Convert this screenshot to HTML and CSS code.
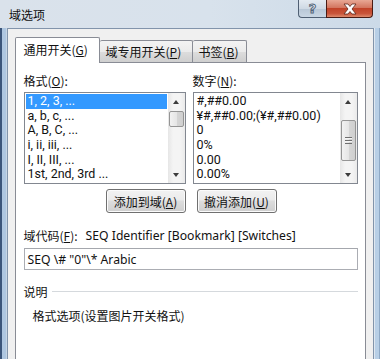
FILE: index.html
```html
<!DOCTYPE html>
<html>
<head>
<meta charset="utf-8">
<link rel="stylesheet" href="styles.css">
</head>
<body>
<div class="window">
  <div class="titlebar">
    <span class="title">域选项</span>
    <div class="caption-btns">
      <div class="cbtn help"><span>?</span></div>
      <div class="cbtn close">
        <svg width="16" height="12" viewBox="0 0 16 12"><path d="M2 1 H6 L8 3.5 L10 1 H14 L10 6 L14 11 H10 L8 8.5 L6 11 H2 L6 6 Z" fill="#fff" stroke="#5a2418" stroke-width="0.8" stroke-linejoin="round"/></svg>
      </div>
    </div>
  </div>
  <div class="main">
    <div class="frame-l"></div>
    <div class="client">
      <div class="tabs">
        <div class="tab active">通用开关(<u>G</u>)</div>
        <div class="tab t2">域专用开关(<u>P</u>)</div>
        <div class="tab t3">书签(<u>B</u>)</div>
      </div>
      <div class="panel">
        <div class="lists">
          <div class="col">
            <div class="label">格式(<u>O</u>):</div>
            <div class="listbox lb1">
              <div class="items">
                <div class="item sel">1, 2, 3, ...</div>
                <div class="item">a, b, c, ...</div>
                <div class="item">A, B, C, ...</div>
                <div class="item">i, ii, iii, ...</div>
                <div class="item">I, II, III, ...</div>
                <div class="item">1st, 2nd, 3rd ...</div>
              </div>
              <div class="scrollbar">
                <div class="arrow"><span class="tri up"></span></div>
                <div class="track"><div class="thumb thumb-a"></div></div>
                <div class="arrow"><span class="tri down"></span></div>
              </div>
            </div>
          </div>
          <div class="col">
            <div class="label">数字(<u>N</u>):</div>
            <div class="listbox lb2">
              <div class="items">
                <div class="item">#,##0.00</div>
                <div class="item">¥#,##0.00;(¥#,##0.00)</div>
                <div class="item">0</div>
                <div class="item">0%</div>
                <div class="item">0.00</div>
                <div class="item">0.00%</div>
              </div>
              <div class="scrollbar">
                <div class="arrow"><span class="tri up"></span></div>
                <div class="track"><div class="thumb thumb-b"><span class="grip"></span></div></div>
                <div class="arrow"><span class="tri down"></span></div>
              </div>
            </div>
          </div>
        </div>
        <div class="buttons">
          <div class="btn">添加到域(<u>A</u>)</div>
          <div class="btn">撤消添加(<u>U</u>)</div>
        </div>
        <div class="fieldcode"><span>域代码(<u>F</u>):</span><span class="fc">SEQ Identifier [Bookmark] [Switches]</span></div>
        <div class="input">SEQ \# "0"\* Arabic</div>
        <div class="group"><span>说明</span><span class="line"></span></div>
        <div class="desc">格式选项(设置图片开关格式)</div>
      </div>
    </div>
    <div class="frame-r"></div>
  </div>
</div>
</body>
</html>
```

FILE: styles.css
```css
* { box-sizing: border-box; }
html, body { margin: 0; padding: 0; background: #fff; }
body {
  font-family: "Noto Sans", "Noto Sans CJK SC", sans-serif;
  font-size: 12px;
  line-height: 15px;
  color: #111;
}
u { text-decoration: underline; text-underline-offset: 1px; }

.window {
  width: 380px;
  height: 359px;
  display: flex;
  flex-direction: column;
  overflow: hidden;
  background: #cfdbe8;
}

.titlebar {
  height: 28px;
  display: flex;
  align-items: flex-start;
  background: linear-gradient(to right, #dae2eb, #d8e2ec 55%, #ccdae8);
}
.title {
  padding-left: 9px;
  padding-top: 7px;
  font-family: "Noto Sans CJK SC", sans-serif;
  color: #0f0f0f;
}
.caption-btns {
  margin-left: auto;
  margin-right: 7px;
  display: flex;
  height: 18px;
}
.cbtn {
  height: 18px;
  display: flex;
  align-items: center;
  justify-content: center;
  border: 1px solid #4f5f73;
  border-top: none;
}
.help {
  width: 28px;
  border-right: none;
  border-bottom-left-radius: 4px;
  background: linear-gradient(to bottom, #e3eaf1, #cfd9e4 50%, #b7c6d6 51%, #c9d6e3);
}
.help span {
  font-family: "DejaVu Sans", sans-serif;
  font-weight: bold;
  font-size: 13px;
  color: #e9eef3;
  -webkit-text-stroke: 1px #55667a;
  line-height: 13px;
}
.close {
  width: 47px;
  border-bottom-right-radius: 4px;
  border-color: #4a1c14;
  background: linear-gradient(to bottom, #e8a894, #d3765f 45%, #c14328 50%, #c9553a 80%, #de8a6c);
}

.main {
  flex: 1;
  display: flex;
  min-height: 0;
}
.frame-l {
  width: 7px;
  background: linear-gradient(to right, #3b557a 0 2px, #aec6e0 2px 6px, #c6d6e6 6px);
}
.frame-r {
  width: 7px;
  background: linear-gradient(to right, #dfe8f1 0 1px, #b8cfe6 1px 5px, #8ea9c6 5px);
}
.client {
  flex: 1;
  display: flex;
  flex-direction: column;
  background: #f0f0f0;
  border: 1px solid #8294ab;
  border-bottom: none;
  padding: 8px 7px 0 7px;
  min-height: 0;
}

.tabs {
  display: flex;
  align-items: flex-end;
  height: 25px;
  position: relative;
  z-index: 1;
}
.tab {
  height: 22px;
  border: 1px solid #898c95;
  border-bottom: none;
  border-left: none;
  display: flex;
  align-items: center;
  font-family: "Noto Sans CJK SC", sans-serif;
  background: linear-gradient(to bottom, #f3f3f3, #ebebeb 50%, #dddddd 51%, #cfcfcf);
  border-radius: 2px 2px 0 0;
}
.tab.active {
  width: 85px;
  height: 26px;
  margin-bottom: -1px;
  border-left: 1px solid #898c95;
  background: #fff;
  padding-left: 8px;
  padding-bottom: 2px;
}
.t2 { width: 93px; padding-left: 6px; }
.t3 { width: 54px; padding-left: 6px; }

.panel {
  flex: 1;
  background: #fff;
  border: 1px solid #898c95;
  border-bottom: none;
  padding: 10px 7px 0 8px;
}

.lists {
  display: grid;
  grid-template-columns: 162px 165px;
  column-gap: 7px;
}
.label {
  height: 15px;
  margin-bottom: 4px;
  font-family: "Noto Sans CJK SC", sans-serif;
}
.listbox {
  height: 92px;
  border: 1px solid #828790;
  display: flex;
  background: #fff;
}
.items {
  flex: 1;
  padding: 1px 1px 0 1px;
  overflow: hidden;
}
.item {
  height: 14.7px;
  line-height: 14.7px;
  padding-left: 2px;
  white-space: nowrap;
  font-family: Roboto, "Noto Sans", sans-serif;
  font-size: 12.5px;
}
.item.sel {
  background: #3399ff;
  color: #fff;
}

.scrollbar {
  width: 17px;
  display: flex;
  flex-direction: column;
  background: linear-gradient(to right, #e6e6e6, #f4f4f4 30%, #f4f4f4 70%, #eaeaea);
}
.arrow {
  height: 17px;
  display: flex;
  align-items: center;
  justify-content: center;
}
.tri {
  width: 0;
  height: 0;
  border-left: 3.5px solid transparent;
  border-right: 3.5px solid transparent;
}
.tri.up { border-bottom: 4px solid #3c3c3c; }
.tri.down { border-top: 4px solid #3c3c3c; }
.track {
  flex: 1;
  padding: 0 1px;
}
.thumb {
  border: 1px solid #959595;
  border-radius: 2px;
  background: linear-gradient(to right, #f2f2f2, #e6e6e6 50%, #d6d6d6 51%, #cfcfcf);
  display: flex;
  align-items: center;
  justify-content: center;
}
.thumb-a { margin-top: 1px; height: 16px; }
.thumb-b { margin-top: 10px; height: 41px; }
.grip {
  width: 7px;
  height: 7px;
  background: repeating-linear-gradient(to bottom, #6f6f6f 0 1px, #f5f5f5 1px 2px, transparent 2px 3px);
}

.buttons {
  display: flex;
  gap: 11px;
  padding-left: 82px;
  margin-top: 5px;
}
.btn {
  width: 80px;
  height: 24px;
  border: 1px solid #707070;
  border-radius: 3px;
  display: flex;
  align-items: center;
  justify-content: center;
  font-family: "Noto Sans CJK SC", sans-serif;
  background: linear-gradient(to bottom, #f2f2f2, #ebebeb 45%, #dddddd 50%, #cfcfcf);
  box-shadow: inset 0 0 0 1px #fbfbfb;
}

.fieldcode {
  margin-top: 15px;
  height: 15px;
  display: flex;
  white-space: nowrap;
}
.fieldcode > span:first-child { font-family: "Noto Sans CJK SC", sans-serif; }
.fc { margin-left: 8px; font-size: 12.2px; }

.input {
  margin-top: 5px;
  width: 334px;
  height: 22px;
  border: 1px solid #abadb3;
  border-top-color: #a4a7ad;
  padding-left: 3px;
  display: flex;
  align-items: center;
  font-size: 12.2px;
}

.group {
  margin-top: 14px;
  display: flex;
  align-items: center;
  height: 15px;
  width: 334px;
}
.group > span:first-child { font-family: "Noto Sans CJK SC", sans-serif; }
.line {
  flex: 1;
  margin-left: 4px;
  height: 1px;
  background: #d5d9dd;
}
.desc {
  margin-top: 9px;
  padding-left: 9px;
  font-family: "Noto Sans CJK SC", sans-serif;
}
```
